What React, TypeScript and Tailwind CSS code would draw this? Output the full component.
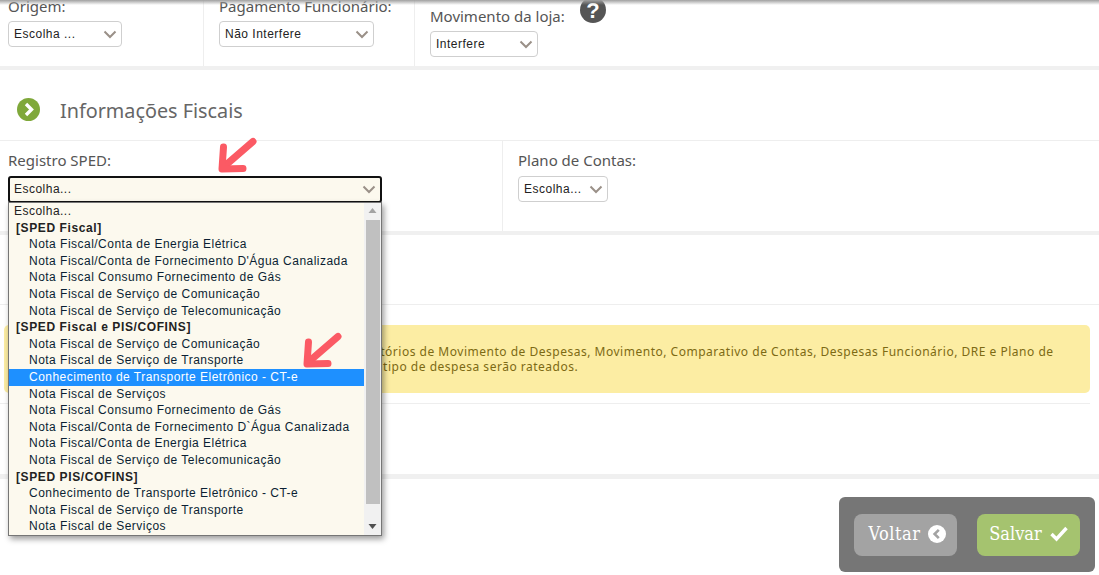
import React from "react";

const sans = "font-['Noto_Sans','Open_Sans',sans-serif]";
const arial = "font-['Liberation_Sans',Arial,sans-serif]";

type Opt = { label: string; group?: boolean; active?: boolean; top?: boolean };

const options: Opt[] = [
  { label: "Escolha...", top: true },
  { label: "[SPED Fiscal]", group: true },
  { label: "Nota Fiscal/Conta de Energia Elétrica" },
  { label: "Nota Fiscal/Conta de Fornecimento D'Água Canalizada" },
  { label: "Nota Fiscal Consumo Fornecimento de Gás" },
  { label: "Nota Fiscal de Serviço de Comunicação" },
  { label: "Nota Fiscal de Serviço de Telecomunicação" },
  { label: "[SPED Fiscal e PIS/COFINS]", group: true },
  { label: "Nota Fiscal de Serviço de Comunicação" },
  { label: "Nota Fiscal de Serviço de Transporte" },
  { label: "Conhecimento de Transporte Eletrônico - CT-e", active: true },
  { label: "Nota Fiscal de Serviços" },
  { label: "Nota Fiscal Consumo Fornecimento de Gás" },
  { label: "Nota Fiscal/Conta de Fornecimento D`Água Canalizada" },
  { label: "Nota Fiscal/Conta de Energia Elétrica" },
  { label: "Nota Fiscal de Serviço de Telecomunicação" },
  { label: "[SPED PIS/COFINS]", group: true },
  { label: "Conhecimento de Transporte Eletrônico - CT-e" },
  { label: "Nota Fiscal de Serviço de Transporte" },
  { label: "Nota Fiscal de Serviços" },
];

function Chevron() {
  return (
    <svg width="14" height="9" viewBox="0 0 14 9" className="shrink-0">
      <path d="M1.5 1.5 7 7l5.5-5.5" fill="none" stroke="#9a9088" strokeWidth="2" />
    </svg>
  );
}

function Select({ value, className }: { value: string; className: string }) {
  return (
    <div className={`flex h-[26px] items-center justify-between rounded-[4px] border border-[#cfcfcf] bg-white pl-[5px] pr-[4px] text-[12px] text-[#222] ${arial} ${className}`}>
      <span className="tracking-[0.5px]">{value}</span>
      <Chevron />
    </div>
  );
}

function Label({ children }: { children: React.ReactNode }) {
  return <div className={`whitespace-nowrap text-[15px] leading-[20px] text-[#555] ${sans}`}>{children}</div>;
}

function RedArrow({ className }: { className: string }) {
  return (
    <svg viewBox="0 0 40 38" width="40" height="38" className={className}>
      <path d="M35 4.5 9 27" fill="none" stroke="#fb5a64" strokeWidth="7" strokeLinecap="round" />
      <path d="M5.5 10 4 32l21-.5" fill="none" stroke="#fb5a64" strokeWidth="7" strokeLinecap="round" strokeLinejoin="round" />
    </svg>
  );
}

function Dropdown() {
  return (
    <div className={`absolute left-[8px] top-[202px] flex h-[334px] w-[374px] border border-[#767676] bg-[#fcf9ee] shadow-[2px_3px_6px_rgba(0,0,0,0.4)] ${arial}`}>
      <div className="w-[356px]">
        {options.map((o, i) => (
          <div
            key={i}
            className={`h-[16.6px] whitespace-nowrap text-[12px] leading-[16.6px] ${
              o.group ? "pl-[7px] font-bold tracking-[0.6px] text-[#222]" : o.top ? "pl-[5px] tracking-[0.48px] text-[#222]" : "pl-[20px] tracking-[0.48px] text-[#0b1f33]"
            } ${o.active ? "bg-[#1e90ff] text-white" : ""}`}
          >
            {o.label}
          </div>
        ))}
      </div>
      <div className="flex w-[17px] flex-col items-center bg-[#f1f1f1]">
        <svg width="9" height="17" viewBox="0 0 9 17" className="shrink-0">
          <path d="M4.5 5 8.5 10H.5z" fill="#a3a3a3" />
        </svg>
        <div className="h-[284px] w-[14px] bg-[#c0c0c0]" />
        <div className="flex-1" />
        <svg width="9" height="17" viewBox="0 0 9 17" className="shrink-0">
          <path d="M4.5 11 8.5 6H.5z" fill="#505050" />
        </svg>
      </div>
    </div>
  );
}

function Actions() {
  return (
    <div className="absolute left-[839px] top-[497px] flex h-[75px] w-[256px] items-center gap-[20px] rounded-[6px] bg-[#767676] px-[15px] font-['DejaVu_Serif_Condensed','DejaVu_Serif',serif] text-[18px] text-white">
      <button className="flex h-[42px] w-[103px] items-center justify-center gap-[8px] rounded-[8px] bg-[#a3a3a3] pl-[4px]">
        <span className="-mt-[2px] tracking-[0.5px]">Voltar</span>
        <svg width="18" height="18" viewBox="0 0 18 18" className="-mt-[1px]">
          <circle cx="9" cy="9" r="9" fill="#fff" />
          <path d="M10.8 4.8 6.6 9l4.2 4.2" fill="none" stroke="#a3a3a3" strokeWidth="2.6" />
        </svg>
      </button>
      <button className="flex h-[42px] w-[103px] items-center justify-center gap-[8px] rounded-[8px] bg-[#a5c36f]">
        <span className="-mt-[2px]">Salvar</span>
        <svg width="18" height="16" viewBox="0 0 18 16" className="-mt-[2px]">
          <path d="M1.5 8 6.5 13 16.5 2" fill="none" stroke="#fff" strokeWidth="3.4" />
        </svg>
      </button>
    </div>
  );
}

export default function App() {
  return (
    <div className="relative h-[575px] w-[1099px] overflow-hidden bg-white">
      {/* linha de cima */}
      <div className="flex h-[66px]">
        <div className="w-[204px] border-r border-[#eee] pl-[8px]">
          <div className="-mt-[4px]"><Label>Origem:</Label></div>
          <Select value="Escolha ..." className="mt-[5px] w-[114px]" />
        </div>
        <div className="w-[211px] border-r border-[#eee] pl-[15px]">
          <div className="-mt-[4px]"><Label>Pagamento Funcionário:</Label></div>
          <Select value="Não Interfere" className="mt-[5px] w-[155px]" />
        </div>
        <div className="pl-[15px]">
          <div className="mt-[6px] flex">
            <Label>Movimento da loja:</Label>
            <svg width="26" height="26" viewBox="0 0 26 26" className="-mt-[8px] ml-[15px]">
              <circle cx="13" cy="12" r="13" fill="#555" />
              <text x="13" y="20" textAnchor="middle" fontSize="22" fontWeight="700" fill="#fff" fontFamily="Liberation Sans">?</text>
            </svg>
          </div>
          <Select value="Interfere" className="mt-[5px] w-[108px]" />
        </div>
      </div>
      <div className="h-[4px] bg-[#f0f0f0]" />

      {/* informações fiscais */}
      <div className="flex h-[71px] items-center border-b border-[#eee] pl-[17px] pt-[10px]">
        <svg width="23" height="23" viewBox="0 0 23 23" className="-mt-[1px]">
          <circle cx="11.5" cy="11.5" r="11.5" fill="#7fa83a" />
          <path d="M9 6l5.5 5.5L9 17" fill="none" stroke="#fff" strokeWidth="3.4" />
        </svg>
        <span className={`ml-[20px] mt-[2px] text-[19.8px] text-[#666] ${sans}`}>Informações Fiscais</span>
      </div>
      <div className="flex h-[90px]">
        <div className="w-[503px] border-r border-[#eee] pl-[8px] pt-[9px]">
          <Label>Registro SPED:</Label>
          <div className={`mt-[6px] flex h-[27px] w-[374px] items-center justify-between rounded-[3px] border-2 border-[#111] bg-[#fcf9ee] pb-[1px] pl-[4px] pr-[4px] text-[12px] text-[#222] ${arial}`}>
            <span className="tracking-[0.48px]">Escolha...</span>
            <Chevron />
          </div>
        </div>
        <div className="pl-[15px] pt-[9px]">
          <Label>Plano de Contas:</Label>
          <Select value="Escolha..." className="mt-[6px] w-[90px]" />
        </div>
      </div>
      <div className="h-[4px] bg-[#f0f0f0]" />

      {/* seção de baixo */}
      <div className="h-[70px] border-b border-[#eee]" />
      <div className="ml-[4px] mt-[20px] h-[68px] w-[1086px] rounded-[5px] bg-[#fceda3] pt-[19px] text-[12px] leading-[15px] text-[#7d6a14]">
        <div className={`whitespace-nowrap ${sans}`}>
          <p className="pl-[5px] tracking-[0.51px]">As despesas lançadas neste tipo não serão somadas nos relatórios de Movimento de Despesas, Movimento, Comparativo de Contas, Despesas Funcionário, DRE e Plano de</p>
          <p className="pl-[38px] tracking-[0.51px]">Contas. Todos os valores lançados no sistema com este tipo de despesa serão rateados.</p>
        </div>
      </div>
      <div className="mt-[10px] h-[71px] w-[1090px] border-t border-[#eee]" />
      <div className="h-[5px] bg-[#f0f0f0]" />

      <div className="absolute inset-x-0 top-0 h-[5px] bg-gradient-to-b from-[#a0a0a0] to-transparent" />
      <RedArrow className="absolute left-[218px] top-[137px]" />
      <Dropdown />
      <RedArrow className="absolute left-[303px] top-[332px]" />
      <Actions />
    </div>
  );
}
